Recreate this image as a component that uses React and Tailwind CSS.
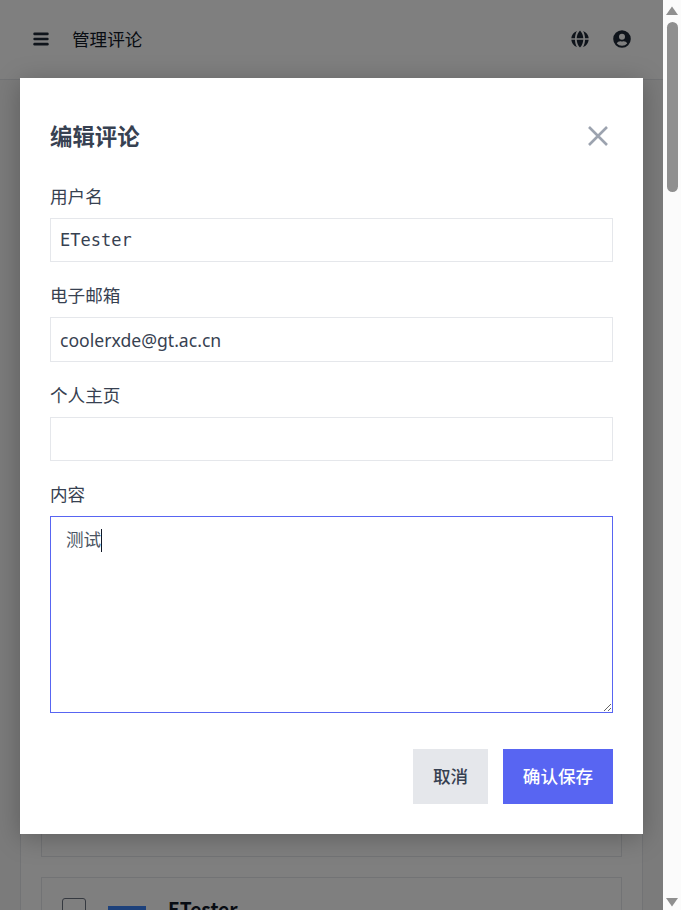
import React from "react";

const cjk = "font-['Noto_Sans_CJK_SC','Noto_Sans',sans-serif]";

function Field({ label, value, mono, mt, inputClass }) {
  return (
    <div className={mt}>
      <label className="block text-[17.6px] leading-[26.4px] text-[#374151]">{label}</label>
      <input
        readOnly
        value={value}
        className={`block w-full border border-[#e5e7eb] bg-white px-[9px] text-[#374151] outline-none ${inputClass} ${mono ? "font-['DejaVu_Sans_Mono',monospace] text-[17px]" : "font-['Noto_Sans',sans-serif] text-[17.6px]"}`}
      />
    </div>
  );
}

export default function App() {
  return (
    <div className={`flex h-[910px] w-full overflow-hidden bg-white ${cjk}`}>
      <div className="relative w-[663px] shrink-0 overflow-hidden bg-[#f7f7f7]">
        <header className="flex h-[80px] items-center justify-between border-b border-[#e5e7eb] bg-white pb-[1px] pl-[33px] pr-[32px] text-[#111827]">
          <div className="flex items-center gap-[23px]">
            <svg width="16" height="14" viewBox="0 0 16 14" className="text-[#1f2937]" fill="currentColor">
              <rect x="0.3" y="0.6" width="15.4" height="2.6" rx="1.2" />
              <rect x="0.3" y="5.7" width="15.4" height="2.6" rx="1.2" />
              <rect x="0.3" y="10.8" width="15.4" height="2.6" rx="1.2" />
            </svg>
            <span className="text-[17.6px]">管理评论</span>
          </div>
          <div className="flex items-center gap-[24px]">
            <svg width="18" height="18" viewBox="0 0 18 18" className="text-[#1f2937]" fill="currentColor">
              <path d="M6 .9C4.7 2.9 4.1 5.5 4 8.2H.3A8.8 8.8 0 0 1 6 .9ZM12 .9A8.8 8.8 0 0 1 17.7 8.2H14C13.9 5.5 13.3 2.9 12 .9ZM9 .4C7 2.4 5.8 5.4 5.7 8.2H12.3C12.2 5.4 11 2.4 9 .4ZM.3 9.8H4C4.1 12.5 4.7 15.1 6 17.1A8.8 8.8 0 0 1 .3 9.8ZM5.7 9.8H12.3C12.2 12.6 11 15.6 9 17.6 7 15.6 5.8 12.6 5.7 9.8ZM14 9.8H17.7A8.8 8.8 0 0 1 12 17.1C13.3 15.1 13.9 12.5 14 9.8Z" />
            </svg>
            <svg width="18" height="18" viewBox="0 0 18 18" className="text-[#1f2937]" fill="currentColor">
              <path fillRule="evenodd" d="M9 .2a8.8 8.8 0 1 0 0 17.6A8.8 8.8 0 0 0 9 .2Zm0 3.6a3 3 0 1 1 0 6 3 3 0 0 1 0-6Zm0 12a6.8 6.8 0 0 1-5.2-2.4c.7-1.3 2-2.2 3.5-2.2.2 0 .4 0 .6.1.4.1.7.2 1.1.2s.7-.1 1.1-.2c.2-.1.4-.1.6-.1 1.5 0 2.8.9 3.5 2.2A6.8 6.8 0 0 1 9 15.8Z" />
            </svg>
          </div>
        </header>

        <main className="mx-[20px] h-[900px] border-x border-[#e5e7eb] bg-white px-[20px] pt-[677px]">
          <div className="h-[100px] border border-[#e5e7eb]" />
          <div className="mt-[20px] h-[100px] border border-[#e5e7eb] px-[20px] pt-[20px]">
            <div className="flex items-start">
              <div className="h-[24px] w-[24px] rounded-[3px] border border-[#6b7280] bg-white" />
              <div className="ml-[22px] mt-[8px] h-[38px] w-[38px] bg-[#3b82f6]" />
              <div className="ml-[22px] mt-[-3px] text-[19.2px] font-bold leading-[28px] text-[#111827]">ETester</div>
            </div>
          </div>
        </main>

        <div className="absolute inset-0 bg-black/50">
          <div className="absolute left-[20px] top-[78px] h-[756px] w-[623px] bg-white px-[30px] pt-[39px] shadow-[0_4px_24px_rgba(0,0,0,0.25)]">
            <div className="flex h-[37px] items-start justify-between pr-[4px]">
              <h2 className="text-[22.4px] font-bold leading-[36px] text-[#374151]">编辑评论</h2>
              <svg width="22" height="22" viewBox="0 0 22 22" className="mt-[8px] text-[#9ca3af]" fill="none" stroke="currentColor" strokeWidth="2.6">
                <path d="M2 2 20 20M20 2 2 20" />
              </svg>
            </div>
            <Field mt="mt-[29px]" label="用户名" value="ETester" mono inputClass="mt-[9px] h-[44px]" />
            <Field mt="mt-[20px]" label="电子邮箱" value="coolerxde@gt.ac.cn" inputClass="mt-[8px] h-[45px] pt-[2px]" />
            <Field mt="mt-[20px]" label="个人主页" value="" inputClass="mt-[9px] h-[44px]" />
            <div className="mt-[20px]">
              <label className="block text-[17.6px] leading-[26.4px] text-[#374151]">内容</label>
              <div className="relative mt-[8px]">
                <textarea
                  readOnly
                  defaultValue="测试"
                  className="block h-[197px] w-full border border-[#5865f2] bg-white px-[15px] py-[6px] text-[17.6px] leading-[32px] text-[#4b5563] outline-none"
                />
                <span className="absolute left-[51px] top-[13px] h-[23px] w-px bg-[#111827]" />
              </div>
            </div>
            <div className="mt-[36px] flex justify-end gap-[15px]">
              <button className="h-[55px] w-[75px] bg-[#e5e7eb] text-[17.6px] font-medium text-[#374151]">取消</button>
              <button className="h-[55px] w-[110px] bg-[#5865f2] text-[17.6px] font-medium text-white">确认保存</button>
            </div>
          </div>
        </div>
      </div>

      <div className="flex w-[18px] shrink-0 flex-col items-center bg-[#fbfbfb]">
        <svg width="14" height="10" viewBox="0 0 14 10" className="mt-[6px] text-[#8f8f8f]" fill="currentColor"><path d="M7 .5 13 9H1Z" /></svg>
        <div className="mt-[6px] h-[170px] w-[11px] rounded-full bg-[#8f8f8f]" />
        <div className="flex-1" />
        <svg width="14" height="10" viewBox="0 0 14 10" className="mb-[3px] text-[#8f8f8f]" fill="currentColor"><path d="M7 9.5 13 1H1Z" /></svg>
      </div>
    </div>
  );
}
